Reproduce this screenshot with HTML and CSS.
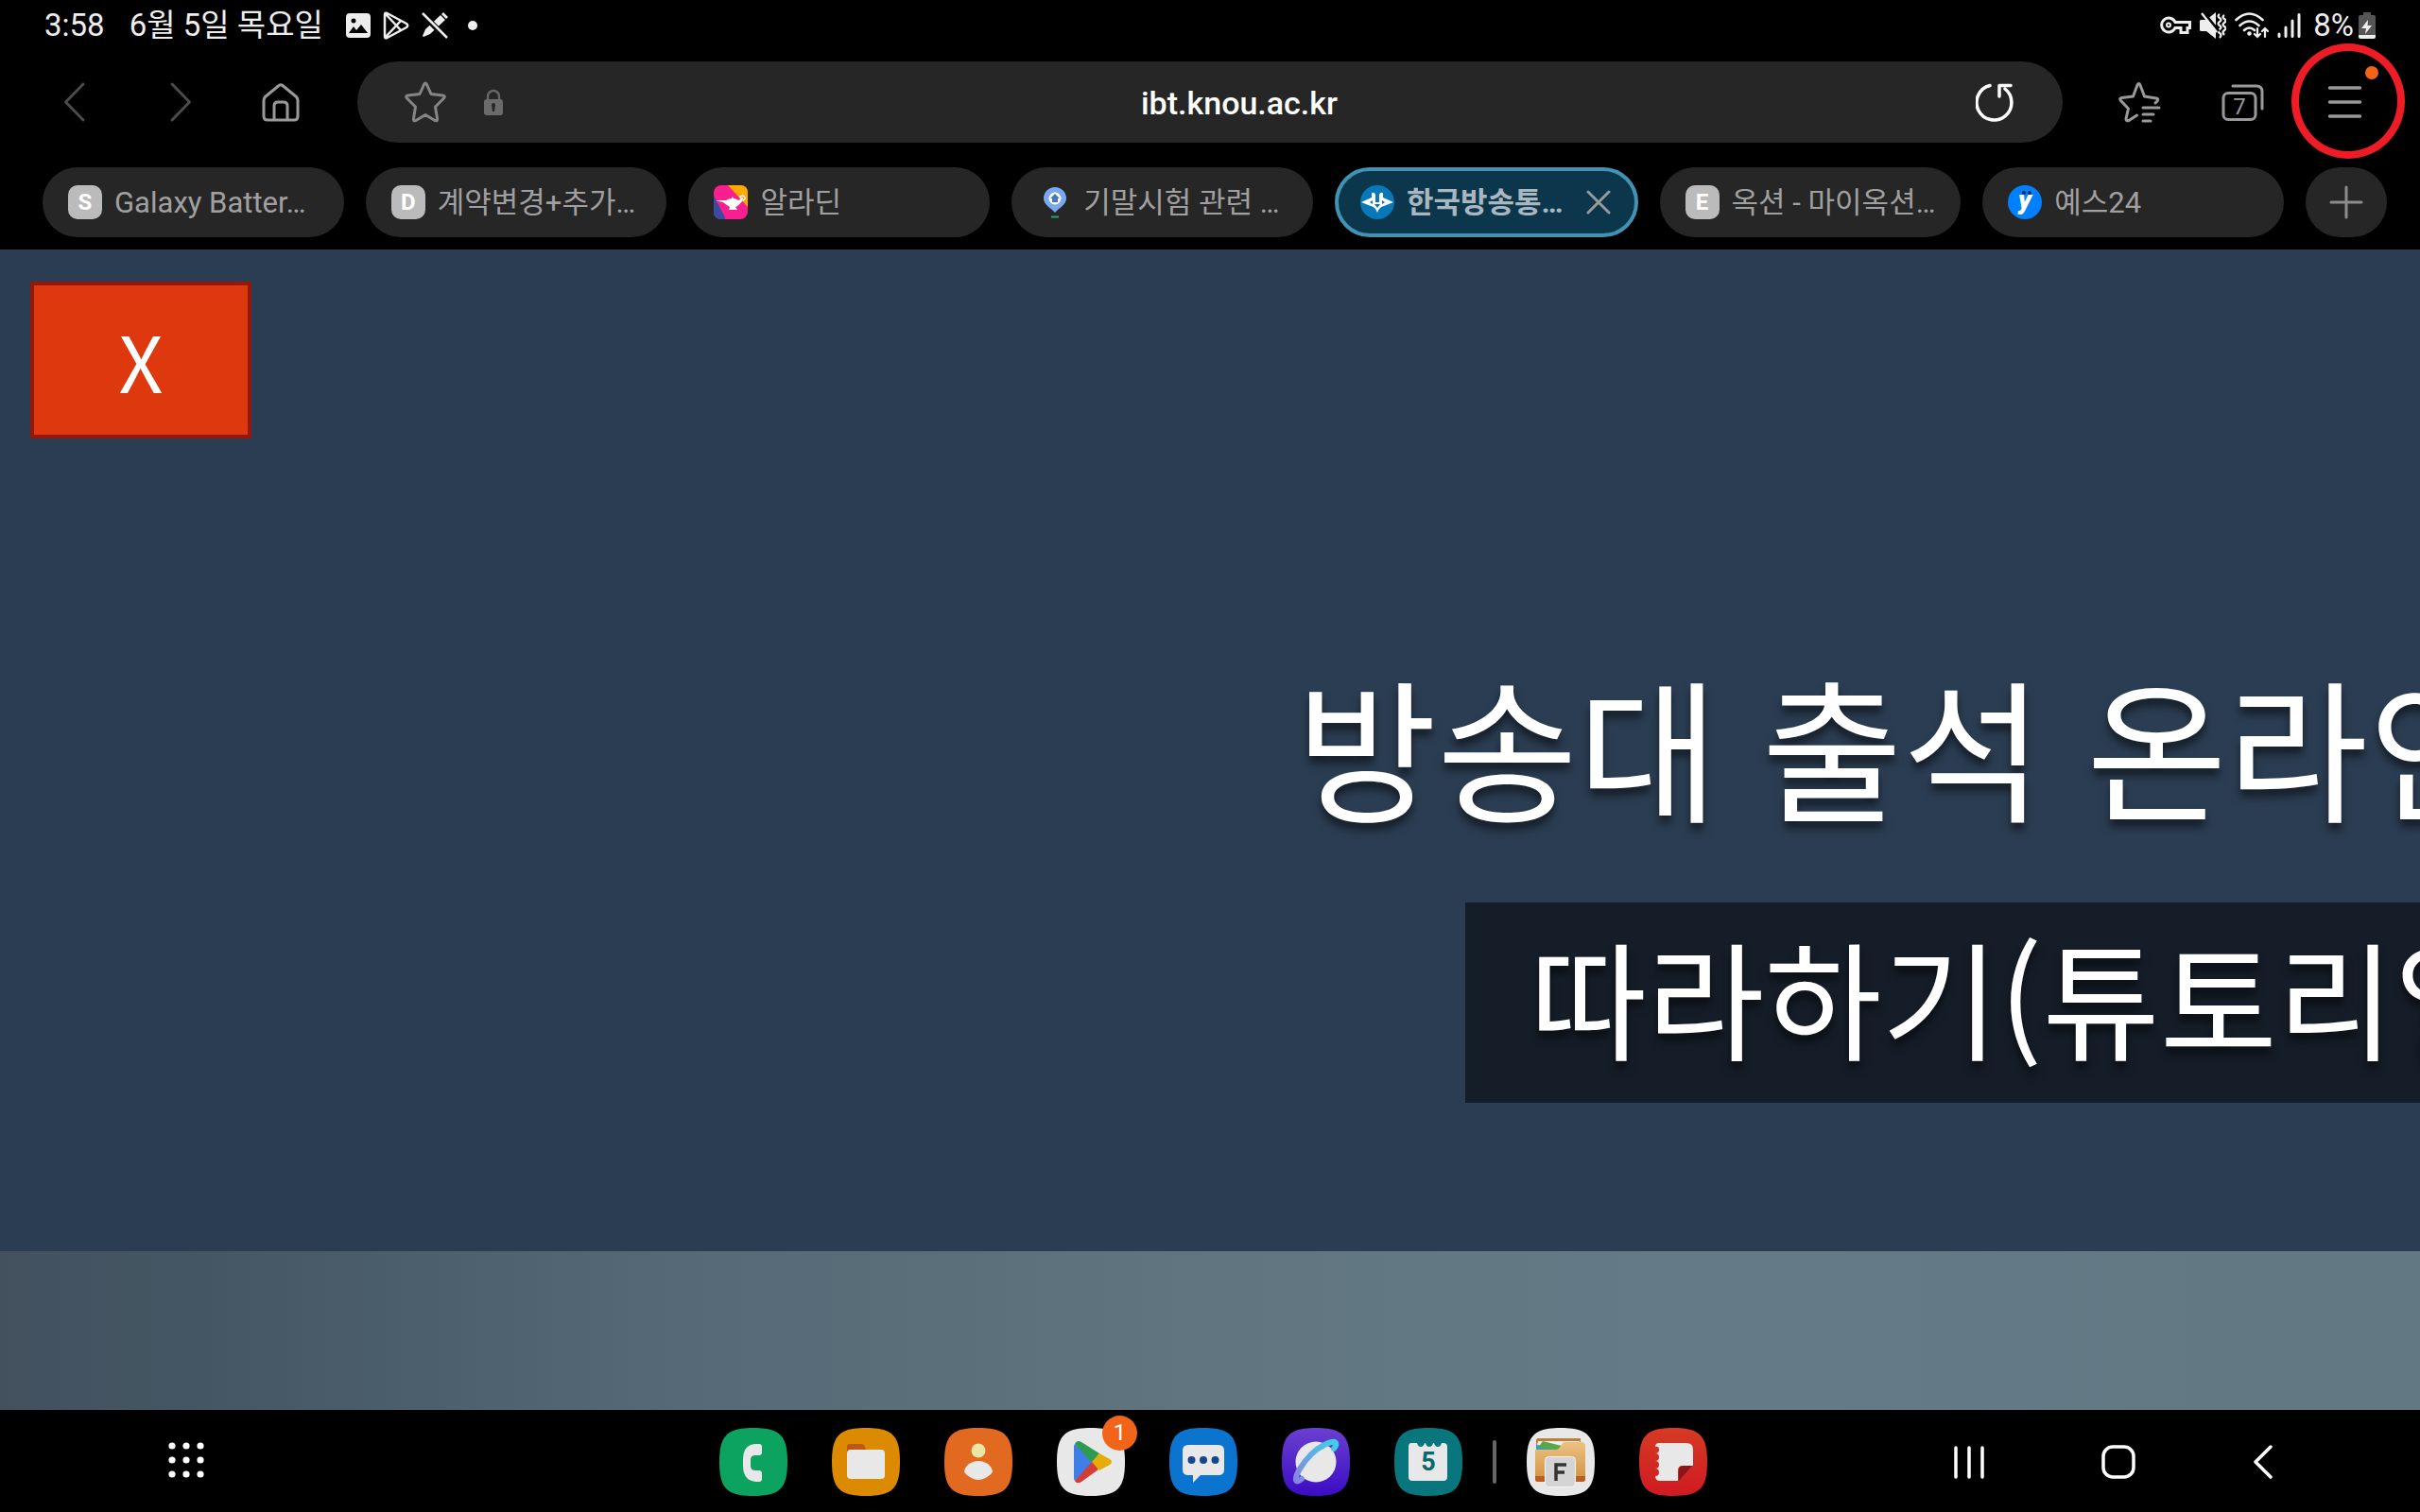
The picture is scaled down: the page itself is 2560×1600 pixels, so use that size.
FILE: index.html
```html
<!DOCTYPE html>
<html lang="ko">
<head>
    <meta charset="UTF-8">
    <meta name="viewport" content="width=device-width, initial-scale=1.0">
    <title>ibt.knou.ac.kr</title>
    <link rel="stylesheet" href="styles.css">
</head>
<body>
    <!-- status bar -->
    <div class="status">
        <span class="time">3:58</span>
        <span class="date">6월 5일 목요일</span>
        <div class="notices">
            <svg width="26" height="26" viewBox="0 0 26 26"><path fill="#eee" fill-rule="evenodd" d="M4 0h18a4 4 0 0 1 4 4v18a4 4 0 0 1-4 4H4a4 4 0 0 1-4-4V4a4 4 0 0 1 4-4zM3 21h20l-7-9-5 6-3-4zM8 5.500a2.500 2.500 0 1 0 0 5 2.500 2.500 0 0 0 0-5z"/></svg>
            <svg width="28" height="30" viewBox="0 0 28 30" fill="none" stroke="#eee" stroke-width="2.500" stroke-linejoin="round"><path d="M2 3.500Q2 1 4.500 2L25 13q2.500 2 0 4L4.500 28Q2 29 2 26.500zM3 3l16 17M3 27l16-17"/></svg>
            <svg width="28" height="28" viewBox="0 0 28 28"><path fill="#eee" d="M20 3l5 5L9 23l-7 3-1-1 3-7zM21 2l2-2 5 5-2 2z"/><path stroke="#000" stroke-width="6" d="M1 2l25 25"/><path stroke="#eee" stroke-width="2.500" d="M1 1l26 26"/></svg>
            <i class="more-dot"></i>
        </div>
        <div class="system">
            <svg width="33" height="20" viewBox="0 0 33 20" fill="none" stroke="#eee" stroke-width="3"><path d="M16 6.500h15.500v6H29v5h-7v-5h-6a7.500 7.500 0 1 1 0-6z"/><circle cx="9" cy="9.500" r="2" stroke-width="2"/></svg>
            <svg width="28" height="28" viewBox="0 0 28 28"><path fill="#eee" d="M0 9q0-1 2-1h5l10-8v28L7 20H2q-2 0-2-1z"/><path fill="none" stroke="#eee" stroke-width="2.300" d="M21 2q-3 2 0 4t0 4 0 4 0 4 0 4 0 5M26 3q-3 2 0 4t0 4 0 4 0 4 0 5"/><path stroke="#000" stroke-width="3" d="M4 0l16 20"/><path stroke="#eee" stroke-width="2.300" d="M2 1l16 20"/></svg>
            <svg width="36" height="28" viewBox="0 0 36 28" fill="none" stroke="#eee" stroke-width="2.600" stroke-linecap="round"><path d="M1.500 8q14-13 28 0M5.500 14q10-9 20 0M10 19q5.500-5 11 0"/><circle cx="15.500" cy="22.500" r="1" fill="#eee"/><path stroke-width="2.200" d="M24 17v9m-3-3l3 3 3-3M32 26v-9m-3 3l3-3 3 3"/></svg>
            <svg width="25" height="26" viewBox="0 0 25 26" stroke="#eee" stroke-width="3" stroke-linecap="round"><path d="M2 22v2.500M9 15v9.500M16 8v16.500M23 1.500v23"/></svg>
            <div class="battery">
                <span>8%</span>
                <svg width="18" height="28" viewBox="0 0 18 28"><path fill="#555" d="M5 0h8v3h3q2 0 2 2v19H0V5q0-2 2-2h3z"/><path fill="#eee" d="M0 24h18v2q0 2-2 2H2q-2 0-2-2zM10 8l-7 9h5l-1 6 7-9H9.500z"/></svg>
            </div>
        </div>
    </div>

    <!-- browser toolbar -->
    <nav class="toolbar">
        <button type="button" aria-label="뒤로"><svg width="56" height="44" viewBox="0 0 56 44" fill="none" stroke="#4b4b4b" stroke-width="3" stroke-linecap="round" stroke-linejoin="round"><path d="M37 3L18.500 22 37 41"/></svg></button>
        <button type="button" aria-label="앞으로"><svg width="56" height="44" viewBox="0 0 56 44" fill="none" stroke="#4b4b4b" stroke-width="3" stroke-linecap="round" stroke-linejoin="round"><path d="M22 3l18.500 19L22 41"/></svg></button>
        <button type="button" aria-label="홈"><svg width="56" height="44" viewBox="0 0 56 44" fill="none" stroke="#999" stroke-width="3" stroke-linejoin="round"><path d="M26 4.500q2-1.500 4 0l14.500 12q1.500 2 1.500 4V37q0 4-4 4H14q-4 0-4-4V20.500q0-2 1.500-4zM21 41V26q0-4 4-4h6q4 0 4 4v15"/></svg></button>
        <form class="address">
            <button type="button" class="fav" aria-label="북마크 추가"><svg width="44" height="44" viewBox="0 0 44 44" fill="none" stroke="#858585" stroke-width="3" stroke-linejoin="round"><path d="M20.500 3.500q1.500-3 3 0L28 13.500 40.500 15q3 .5 1 3L32.500 27l2 12.500q.5 3-2.500 2l-10-6-10 6q-3 1-2.500-2l2-12.500-9-9q-2-2.500 1-3L16 13.500z"/></svg></button>
            <svg class="lock" width="20" height="28" viewBox="0 0 20 28"><path fill="none" stroke="#666" stroke-width="2.500" d="M4 13V8a6 6 0 0 1 12 0v5"/><rect y="11" width="20" height="17" rx="3" fill="#6b6b6b"/><path fill="#262626" d="M8 17a2 2 0 0 1 4 0l-1 7H9z"/></svg>
            <input type="text" value="ibt.knou.ac.kr" aria-label="주소">
            <button type="button" class="reload" aria-label="새로고침"><svg width="40" height="42" viewBox="0 0 40 42" fill="none" stroke="#fff" stroke-width="3.500" stroke-linecap="round" stroke-linejoin="round"><path d="M15 3.500A18.500 18.500 0 1 0 31 7M25 15V3.500h12"/></svg></button>
        </form>
        <button type="button" aria-label="북마크"><svg width="56" height="44" viewBox="0 0 56 44" fill="none" stroke="#999" stroke-width="3" stroke-linecap="round" stroke-linejoin="round"><path d="M45 23q5-4 1-5l-12.500-2L29 4q-1.500-3-3 0l-4.500 12L9.500 17.500q-3 .5-1 3l8 8.500L14 39.500q0 3 3 2l8.500-5.500M32 28h17M32 35h11M32 42h8"/></svg></button>
        <button type="button" aria-label="탭"><svg width="56" height="44" viewBox="0 0 56 44"><rect x="8" y="12.500" width="34" height="28" rx="5" fill="none" stroke="#999" stroke-width="3"/><path fill="none" stroke="#999" stroke-width="3" stroke-linecap="round" d="M18 5h25q6 0 6 6v18"/><text class="tab-count" x="25" y="35" text-anchor="middle">7</text></svg></button>
        <div class="menu">
            <button type="button" aria-label="메뉴"><svg width="56" height="44" viewBox="0 0 56 44" stroke="#999" stroke-width="3.500" stroke-linecap="round"><path d="M11.500 7h32M11.500 22h32M11.500 37h32"/></svg></button>
            <i class="menu-dot"></i>
            <i class="ring"></i>
        </div>
    </nav>

    <!-- tabs -->
    <div class="tabs">
        <div class="tab"><span class="letter">S</span><span class="label">Galaxy Batter…</span></div>
        <div class="tab"><span class="letter">D</span><span class="label">계약변경+추가…</span></div>
        <div class="tab">
            <svg class="icon" viewBox="0 0 36 36"><rect width="36" height="36" rx="8" fill="#f7208e"/><path fill="#3d4aa2" d="M0 11l12 23v2H8q-8 0-8-8z"/><path fill="#ffa800" d="M15 0h13q8 0 8 8v15z"/><path fill="#fff" d="M2 16h11q3-2 6-2l1-2 1 2q3 0 5 2l4-2v3q-4 5-7 6l2 3H16l1-3q-5-3-7-5z"/><path fill="none" stroke="#fff" stroke-width="1.500" d="M29 16q5 0 4-3t-5-1q0 3 3 2"/></svg>
            <span class="label">알라딘</span>
        </div>
        <div class="tab">
            <svg class="icon" viewBox="0 0 36 36"><path fill="#79a8f0" d="M19 2a12 12 0 0 1 12 12c0 7-8 10-12 15C15 24 7 21 7 14A12 12 0 0 1 19 2z"/><circle cx="19" cy="14" r="6.500" fill="#fff"/><path fill="#4579b9" d="M19 9l5 5h-2v4h-6v-4h-2z"/><path stroke="#2aa36b" stroke-width="2" d="M15 33.500h8"/></svg>
            <span class="label">기말시험 관련 …</span>
        </div>
        <div class="tab active">
            <svg class="icon" viewBox="0 0 36 36"><circle cx="18" cy="18" r="18" fill="#0878b8"/><path fill="#fff" d="M1 18l11-5V8q3-1 4 2v8h4v-8q1-3 4-2v5l11 5-10 4q-5 1-7 7-2-6-7-7z"/><path fill="#0878b8" d="M10 18l3-2v4zM26 18l-3-2v4zM15 20h6l-3 4z"/></svg>
            <span class="label">한국방송통…</span>
            <button type="button" class="close" aria-label="탭 닫기"><svg width="26" height="26" viewBox="0 0 26 26" stroke="#999" stroke-width="3" stroke-linecap="round"><path d="M2 2l22 22M24 2L2 24"/></svg></button>
        </div>
        <div class="tab"><span class="letter">E</span><span class="label">옥션 - 마이옥션…</span></div>
        <div class="tab">
            <svg class="icon" viewBox="0 0 36 36"><circle cx="18" cy="18" r="18" fill="#0080ff"/><text class="yes" x="18" y="25" text-anchor="middle">y</text><circle cx="17" cy="8" r="2" fill="#06265e"/><circle cx="23" cy="8" r="2" fill="#06265e"/></svg>
            <span class="label">예스24</span>
        </div>
        <button type="button" class="new-tab" aria-label="새 탭"><svg width="36" height="36" viewBox="0 0 36 36" stroke="#8c8c8c" stroke-width="3" stroke-linecap="round"><path d="M18 2v32M2 18h32"/></svg></button>
    </div>

    <!-- page content -->
    <main class="page">
        <button type="button" class="exit">X</button>
        <h1 class="title">방송대 출석 온라인</h1>
        <h2 class="subtitle">따라하기(튜토리얼</h2>
    </main>
    <div class="photo"></div>

    <!-- dock -->
    <footer class="dock">
        <div class="dock-left">
            <button type="button" aria-label="앱 목록"><svg width="38" height="38" viewBox="0 0 38 38" fill="#fff"><circle cx="4" cy="4" r="3.600"/><circle cx="19" cy="4" r="3.600"/><circle cx="34" cy="4" r="3.600"/><circle cx="4" cy="19" r="3.600"/><circle cx="19" cy="19" r="3.600"/><circle cx="34" cy="19" r="3.600"/><circle cx="4" cy="34" r="3.600"/><circle cx="19" cy="34" r="3.600"/><circle cx="34" cy="34" r="3.600"/></svg></button>
        </div>
        <div class="apps">
            <svg width="0" height="0" class="defs">
                <defs>
                    <path id="squircle" d="M36 0C64 0 72 8 72 36S64 72 36 72 0 64 0 36 8 0 36 0z"/>
                    <linearGradient id="web" x1="0" y1="0" x2="0" y2="1"><stop offset="0" stop-color="#6b3fd0"/><stop offset="1" stop-color="#3a0cc4"/></linearGradient>
                    <linearGradient id="orbit" x1="1" y1="0" x2="0" y2="1"><stop offset="0" stop-color="#3fd0e6"/><stop offset="1" stop-color="#8a84e4"/></linearGradient>
                    <linearGradient id="note" x1="0" y1="0" x2="0" y2="1"><stop offset="0" stop-color="#d63a24"/><stop offset="1" stop-color="#cf1a22"/></linearGradient>
                    <linearGradient id="folder" x1="0" y1="0" x2="0" y2="1"><stop offset="0" stop-color="#ecc182"/><stop offset="1" stop-color="#d2913f"/></linearGradient>
                </defs>
            </svg>
            <a class="app" href="#" aria-label="전화"><svg viewBox="0 0 72 72"><use href="#squircle" fill="#0ca25f"/><path fill="#e8e8e8" d="M39 17h3q3 0 3 3v6q0 3-3 3h-4q-5 0-5 5v6q0 5 5 5h4q3 0 3 3v6q0 3-3 3h-3Q25 56 25 40v-6q0-17 14-17z"/></svg></a>
            <a class="app" href="#" aria-label="내 파일"><svg viewBox="0 0 72 72"><use href="#squircle" fill="#dc8a00"/><path fill="#bf5710" d="M16 28v-8q0-3 3-3h12q3 0 4 3l3 8z"/><rect x="16" y="23" width="40" height="31" rx="4" fill="#e8e8e8"/></svg></a>
            <a class="app" href="#" aria-label="연락처"><svg viewBox="0 0 72 72"><use href="#squircle" fill="#e26a20"/><circle cx="36" cy="24" r="7.500" fill="#eae6a6"/><path fill="#e8e8e8" d="M36 35c8 0 14 5 15 11q0 1-1 2c-4 4-9 7-14 7s-10-3-14-7q-1-1-1-2c1-6 7-11 15-11z"/></svg></a>
            <a class="app" href="#" aria-label="Play 스토어"><svg viewBox="0 0 72 72"><use href="#squircle" fill="#e8e8e8"/><path fill="#3f7de8" d="M19 17l21 19-21 20q-1-1-1-3V20q0-2 1-3z"/><path fill="#2f9b50" d="M19 17q2-5 7-2l19 12-8 10z"/><path fill="#d63c36" d="M19 56q2 4 7 1l18-13-6-9z"/><path fill="#e5ac0c" d="M45 27l11 6q4 3 0 6l-11 6-8-9z"/></svg><span class="badge">1</span></a>
            <a class="app" href="#" aria-label="메시지"><svg viewBox="0 0 72 72"><use href="#squircle" fill="#0b74cf"/><path fill="#e8e8e8" d="M20 18h32q6 0 6 6v20q0 6-6 6H33l-8 8v-8h-5q-6 0-6-6V24q0-6 6-6z"/><g fill="#14488c"><circle cx="23.500" cy="34" r="4"/><circle cx="36" cy="34" r="4"/><circle cx="48.500" cy="34" r="4"/></g></svg></a>
            <a class="app" href="#" aria-label="인터넷"><svg viewBox="0 0 72 72"><use href="#squircle" fill="url(#web)"/><circle cx="36" cy="36" r="21.500" fill="#e8e8e8"/><path fill="none" stroke="url(#orbit)" stroke-width="6" stroke-linecap="round" stroke-linejoin="round" d="M21 54q-5 4-6 1c-1-5 7-18 16-27S52 14 56 15q3 2-1 7"/></svg></a>
            <a class="app" href="#" aria-label="캘린더"><svg viewBox="0 0 72 72"><use href="#squircle" fill="#08767c"/><path fill="#e8e8e8" d="M18 16h6q1 4 4 4t4-4h1q1 4 4 4t4-4h1q1 4 4 4t4-4h2q4 0 4 4v32q0 4-4 4H19q-4 0-4-4V20q0-4 3-4z"/><text class="day" x="36" y="45" text-anchor="middle">5</text></svg></a>
            <i class="divider"></i>
            <a class="app" href="#" aria-label="파일 관리자"><svg viewBox="0 0 72 72"><use href="#squircle" fill="#e8e8e8"/><path fill="#bf7f3c" d="M12 11h45v8H10v-5q0-3 2-3z"/><path fill="#eee" d="M12 14h44v4H38l-6 5H10z"/><path fill="#3d9ac6" d="M10 18l26 2-4 5H10z"/><path fill="#58a84a" d="M17 14l20 5-5 4-20-2z"/><path fill="url(#folder)" d="M9 23h22q3 0 5-4l2-3q1-1 3-1h17q4 0 4 4v35q0 3-3 3H12q-3 0-3-3z"/><path fill="#b86022" d="M9 51h53v3q0 3-3 3H12q-3 0-3-3z"/><rect x="19.500" y="30.500" width="32" height="32" rx="4" fill="#d4d4d4" stroke="#f5f5f5"/><path fill="none" stroke="#333" stroke-width="3.500" d="M31 56V39h11M31 47h9"/></svg></a>
            <a class="app" href="#" aria-label="노트"><svg viewBox="0 0 72 72"><use href="#squircle" fill="url(#note)"/><path fill="#8c1518" d="M56 40L42 56V45q0-5 5-5z"/><path fill="#e8e8e8" d="M21 16h29q7 0 7 7v17H46q-5 0-5 5v11H22q-5 0-5-5 4 0 4-4t-4-4q4 0 4-4t-4-4q4 0 4-4t-4-4q4 0 4-4t-4-3q0-4 4-4z"/></svg></a>
        </div>
        <div class="dock-right">
            <button type="button" aria-label="최근 앱"><svg width="32" height="36" viewBox="0 0 32 36" stroke="#fff" stroke-width="3.500" stroke-linecap="round"><path d="M2 3v31M16 3v31M30 3v31"/></svg></button>
            <button type="button" aria-label="홈 화면"><svg width="36" height="36" viewBox="0 0 36 36"><rect x="2" y="2" width="32" height="32" rx="10" fill="none" stroke="#fff" stroke-width="3.500"/></svg></button>
            <button type="button" aria-label="이전"><svg width="22" height="36" viewBox="0 0 22 36" fill="none" stroke="#fff" stroke-width="3.500" stroke-linecap="round" stroke-linejoin="round"><path d="M19 2L3 18l16 16"/></svg></button>
        </div>
    </footer>
</body>
</html>
```
FILE: styles.css
```css
* {
    box-sizing: border-box;
}

body {
    margin: 0;
    min-height: 100vh;
    display: flex;
    flex-direction: column;
    background: #000;
    font-family: Roboto, "Noto Sans CJK KR", sans-serif;
    overflow-x: hidden;
}

button {
    padding: 0;
    border: none;
    background: none;
    font-family: inherit;
    cursor: pointer;
}

svg {
    display: block;
}

/* status bar */
.status {
    display: flex;
    align-items: center;
    height: 54px;
    padding: 0 47px;
    color: #eee;
    font-size: 33px;
    line-height: 40px;
}

.date {
    margin-left: 26px;
}

.notices {
    display: flex;
    align-items: center;
    gap: 13px;
    margin-left: 24px;
}

.more-dot {
    width: 10px;
    height: 10px;
    margin-left: 8px;
    border-radius: 50%;
    background: #eee;
}

.system {
    display: flex;
    align-items: center;
    gap: 9px;
    margin-left: auto;
}

.battery {
    display: flex;
    align-items: center;
    gap: 5px;
    margin-left: 4px;
}

/* toolbar */
.toolbar {
    display: flex;
    align-items: center;
    gap: 53px;
    padding: 11px 51px 0;
}

.address {
    flex: 1;
    display: flex;
    align-items: center;
    height: 86px;
    padding: 0 52px 0 50px;
    border-radius: 43px;
    background: #262626;
}

.lock {
    margin-left: 40px;
}

.address input {
    flex: 1;
    min-width: 0;
    padding: 2px 0 0;
    border: none;
    outline: none;
    background: none;
    color: #fff;
    font-family: inherit;
    font-size: 34px;
    font-weight: 500;
    text-align: center;
}

.tab-count {
    fill: #999;
    font-size: 24px;
}

.menu {
    display: flex;
    position: relative;
}

.menu-dot {
    position: absolute;
    top: -16px;
    right: -7px;
    width: 14px;
    height: 14px;
    border-radius: 50%;
    background: #f26419;
}

.ring {
    position: absolute;
    top: -40px;
    left: -29px;
    width: 120px;
    height: 122px;
    border: 8px solid #ee1c25;
    border-radius: 50%;
    pointer-events: none;
}

/* tabs */
.tabs {
    display: flex;
    gap: 23px;
    padding: 26px 35px 13px 45px;
}

.tab {
    flex: 1 1 0;
    min-width: 0;
    display: flex;
    align-items: center;
    gap: 13px;
    height: 74px;
    padding: 0 27px;
    border-radius: 37px;
    background: #262626;
    color: #a0a0a0;
    font-size: 31px;
    line-height: 40px;
}

.tab .label {
    padding-top: 2px;
    white-space: nowrap;
}

.icon,
.letter {
    flex: none;
    width: 36px;
    height: 36px;
}

.letter {
    border-radius: 10px;
    background: #bbb;
    color: #fff;
    font-size: 24px;
    font-weight: 700;
    line-height: 37px;
    text-align: center;
}

.tab.active {
    padding: 0 25px 0 23px;
    border: 4px solid #4192b3;
    background: #0b364b;
    color: #a9b8c0;
    font-weight: 700;
}

.close {
    margin-left: auto;
}

.yes {
    fill: #fff;
    font-size: 28px;
    font-style: italic;
    font-weight: 900;
}

.new-tab {
    display: flex;
    align-items: center;
    justify-content: center;
    width: 86px;
    height: 74px;
    border-radius: 37px;
    background: #262626;
}

/* page */
.page {
    flex: 1;
    overflow: hidden;
    padding-top: 34px;
    background: #2b3d52;
    color: #fff;
    font-family: "Noto Sans CJK KR", sans-serif;
}

.exit {
    display: block;
    width: 234px;
    height: 166px;
    margin-left: 32px;
    border: 4px solid #92190a;
    background: #dd380e;
    color: #fff;
    font-size: 82px;
    line-height: 120px;
}

/* the slide runs past the right edge of the window */
.title,
.subtitle {
    margin: 0;
    font-weight: 400;
    white-space: nowrap;
    text-shadow: 0 8px 8px rgba(0, 0, 0, 0.5);
}

.title {
    margin: 224px 0 0 1371px;
    font-size: 162px;
    line-height: 200px;
}

.subtitle {
    margin: 67px 0 0 1550px;
    padding: 0 0 16px 68px;
    background: #151d28;
    font-size: 135px;
    line-height: 196px;
}

.photo {
    height: 168px;
    background: linear-gradient(to right, #43515f, #445663 8%, #556976 28%, #60757f 50%, #647b87 70%, #627984);
}

/* dock */
.dock {
    display: grid;
    grid-template-columns: 1fr auto 1fr;
    align-items: center;
    height: 108px;
    padding: 2px 155px 0 162px;
}

.dock-left {
    padding-left: 16px;
}

.apps {
    display: flex;
    align-items: center;
    gap: 47px;
}

.defs {
    position: absolute;
}

.app {
    position: relative;
    width: 72px;
    height: 72px;
    text-decoration: none;
}

.badge {
    position: absolute;
    top: -13px;
    right: -13px;
    width: 37px;
    height: 37px;
    border-radius: 50%;
    background: #f26419;
    color: #fff;
    font-size: 24px;
    line-height: 37px;
    text-align: center;
}

.day {
    fill: #08686c;
    font-size: 27px;
    font-weight: 700;
}

.divider {
    width: 4px;
    height: 46px;
    margin: 0 -15px;
    border-radius: 2px;
    background: #666;
}

.dock-right {
    display: flex;
    align-items: center;
    justify-content: flex-end;
    gap: 124px;
}
```
